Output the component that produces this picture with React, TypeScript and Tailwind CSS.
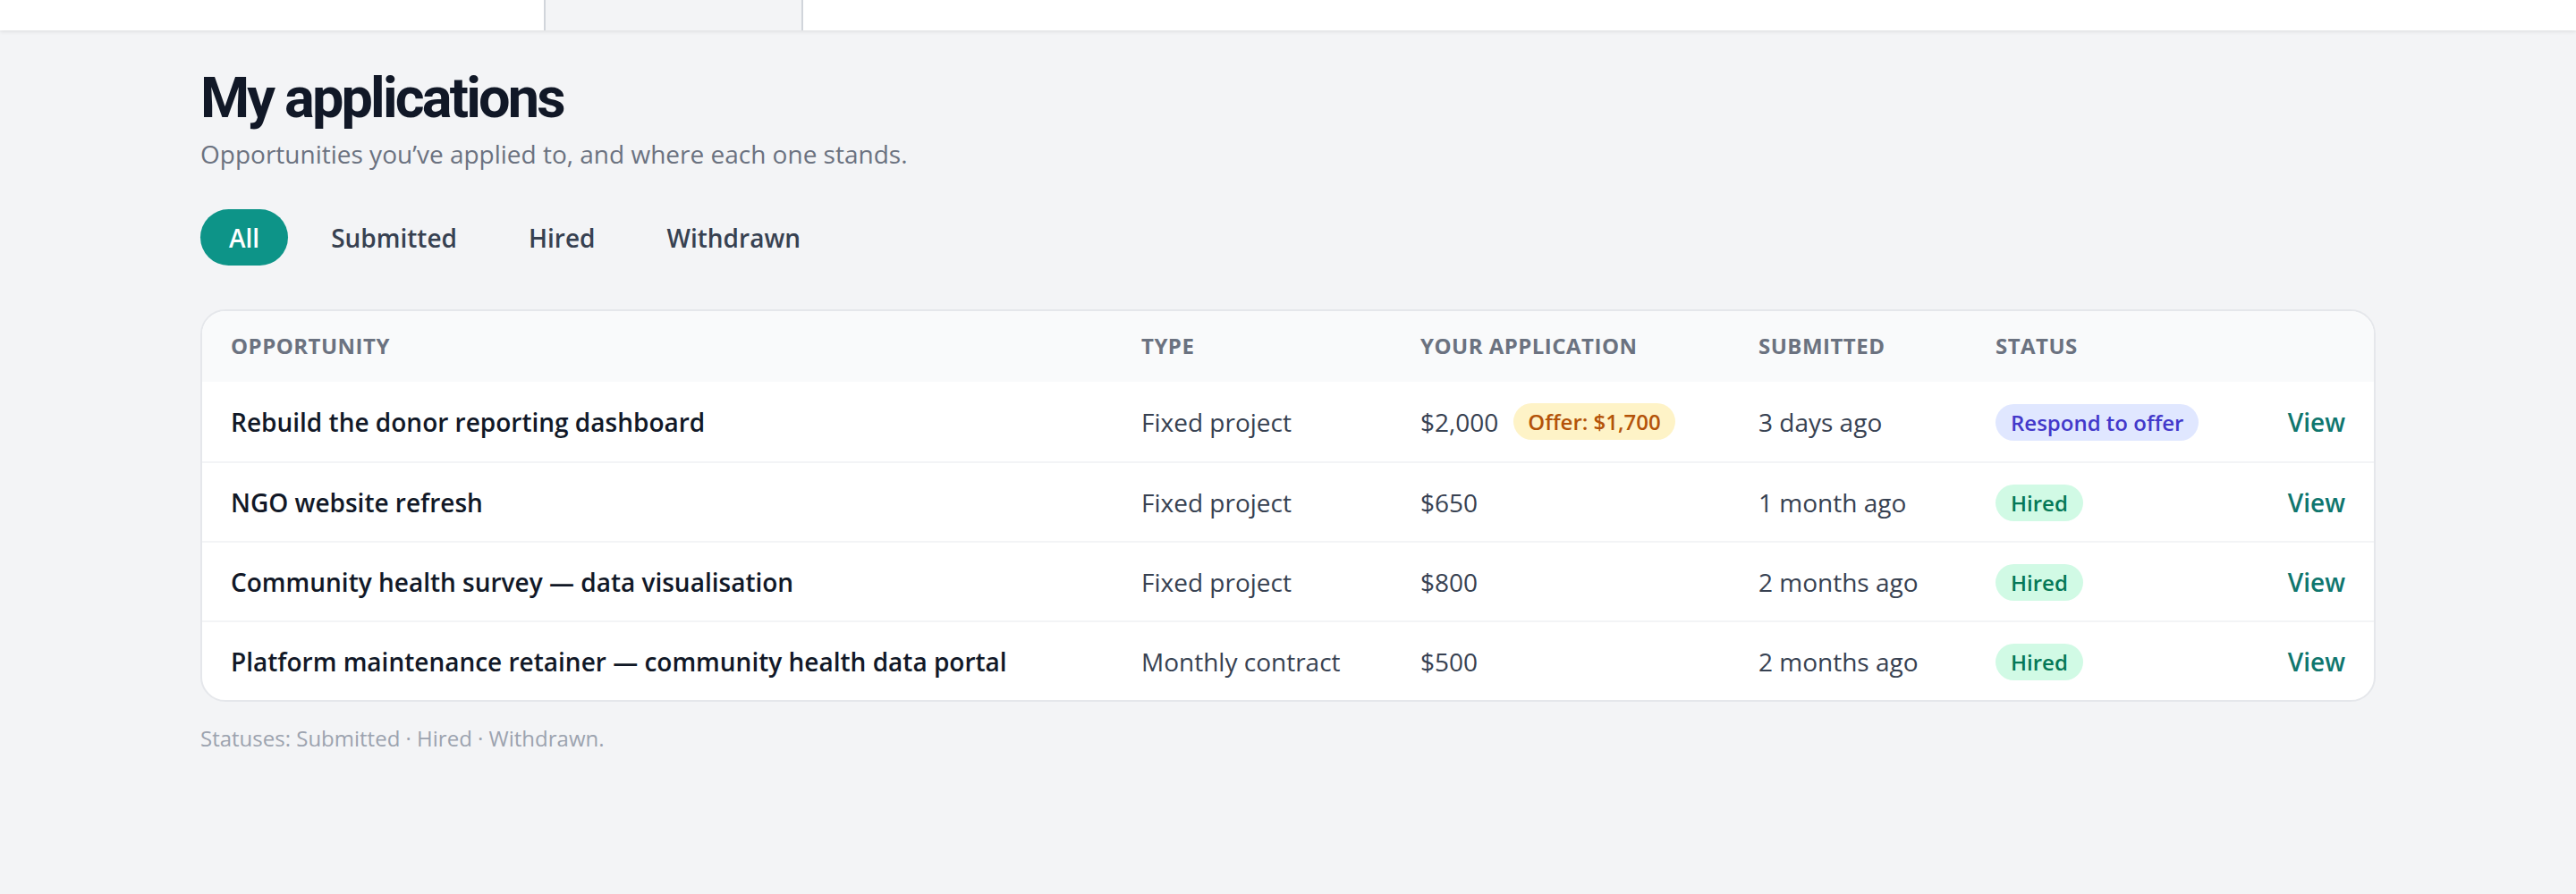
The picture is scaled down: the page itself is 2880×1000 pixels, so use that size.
const rows = [
  {
    title: "Rebuild the donor reporting dashboard",
    type: "Fixed project",
    amount: "$2,000",
    offer: "Offer: $1,700",
    submitted: "3 days ago",
    status: "offer",
  },
  { title: "NGO website refresh", type: "Fixed project", amount: "$650", submitted: "1 month ago", status: "hired" },
  {
    title: "Community health survey — data visualisation",
    type: "Fixed project",
    amount: "$800",
    submitted: "2 months ago",
    status: "hired",
  },
  {
    title: "Platform maintenance retainer — community health data portal",
    type: "Monthly contract",
    amount: "$500",
    submitted: "2 months ago",
    status: "hired",
  },
];

const cols = "grid grid-cols-[1018px_312px_378px_265px_1fr_auto] items-center px-[32px]";

function StatusBadge({ status }: { status: string }) {
  if (status === "offer") {
    return (
      <span className="inline-flex h-[41px] items-center rounded-full bg-[#e0e7ff] px-[17px] text-[24px] font-semibold text-[#4338ca]">
        Respond to offer
      </span>
    );
  }
  return (
    <span className="inline-flex h-[41px] items-center rounded-full bg-[#d1fae5] px-[17px] text-[24px] font-semibold text-[#047857]">
      Hired
    </span>
  );
}

export default function App() {
  return (
    <div className="min-h-screen bg-[#f3f4f6] font-['Open_Sans',sans-serif]">
      <div className="flex h-[34px] bg-white shadow-[0_2px_4px_rgba(0,0,0,0.08)]">
        <div className="w-[608px]" />
        <div className="w-[290px] border-x-2 border-[#d1d5db] bg-[#f3f4f6]" />
      </div>

      <div className="px-[224px] pt-[38px]">
        <h1 className="font-['Roboto',sans-serif] text-[63px] font-bold leading-[76px] tracking-[-0.045em] text-[#111827]">
          My applications
        </h1>
        <p className="mt-[3px] text-[28px] leading-[42px] text-[#6b7280]">
          Opportunities you’ve applied to, and where each one stands.
        </p>

        <div className="mt-[41px] flex gap-[16px]">
          {["All", "Submitted", "Hired", "Withdrawn"].map((t, i) => (
            <button
              key={t}
              className={
                i === 0
                  ? "flex h-[63px] items-center rounded-full bg-[#0d9488] px-[32px] text-[28px] font-semibold text-white"
                  : "flex h-[63px] items-center rounded-full px-[32px] text-[28px] font-semibold text-[#374151]"
              }
            >
              {t}
            </button>
          ))}
        </div>

        <div className="mt-[49px] overflow-hidden rounded-[28px] border-2 border-[#e5e7eb] bg-white">
          <div className={`${cols} h-[79px] bg-[#f9fafb] pb-[2px] text-[24px] font-bold uppercase tracking-[0.02em] text-[#6b7280]`}>
            <div>Opportunity</div>
            <div>Type</div>
            <div>Your application</div>
            <div>Submitted</div>
            <div>Status</div>
            <div />
          </div>
          {rows.map((r, i) => (
            <div
              key={r.title}
              className={`${cols} h-[89px] text-[28px] ${i > 0 ? "border-t-2 border-[#f3f4f6]" : ""}`}
            >
              <div className="font-semibold text-[#111827]">{r.title}</div>
              <div className="text-[#374151]">{r.type}</div>
              <div className="flex items-center gap-[17px] text-[#374151]">
                <span>{r.amount}</span>
                {r.offer ? (
                  <span className="inline-flex h-[41px] items-center rounded-full bg-[#fef3c7] px-[16px] text-[24px] font-semibold text-[#b45309]">
                    {r.offer}
                  </span>
                ) : null}
              </div>
              <div className="text-[#374151]">{r.submitted}</div>
              <div>
                <StatusBadge status={r.status} />
              </div>
              <a className="font-semibold text-[#0f766e]">View</a>
            </div>
          ))}
        </div>

        <p className="mt-[23px] text-[24px] leading-[36px] text-[#9ca3af]">Statuses: Submitted · Hired · Withdrawn.</p>
      </div>
    </div>
  );
}
